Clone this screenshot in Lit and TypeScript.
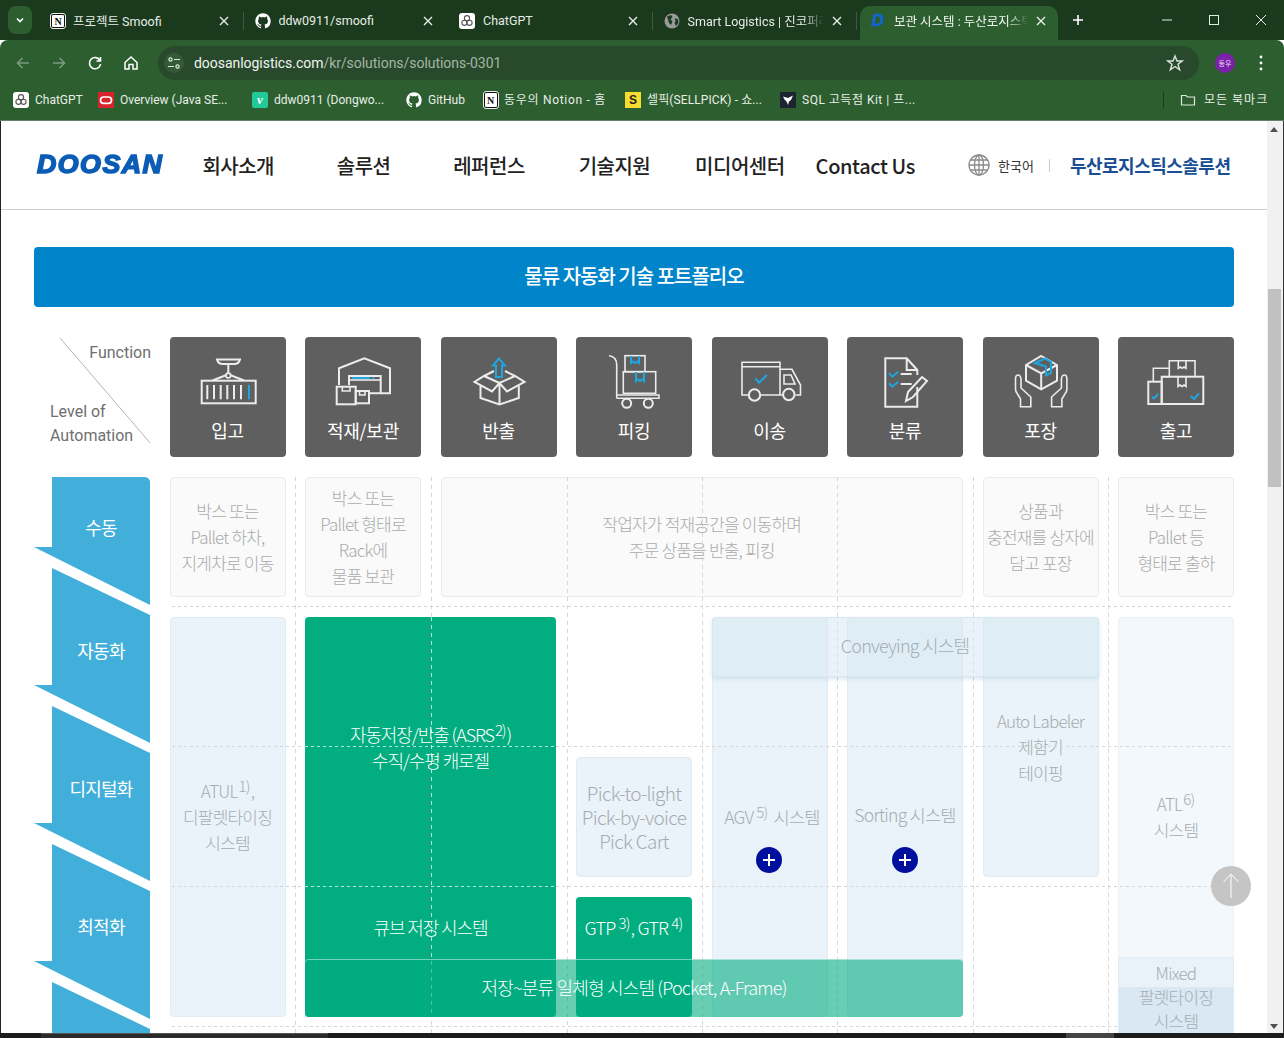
import { LitElement, html, svg, css } from "lit";
import { customElement } from "lit/decorators.js";

const ghPath = "M12 .5C5.65.5.5 5.65.5 12c0 5.08 3.29 9.39 7.86 10.91.58.1.79-.25.79-.56v-2c-3.2.7-3.87-1.36-3.87-1.36-.52-1.33-1.28-1.68-1.28-1.68-1.04-.71.08-.7.08-.7 1.15.08 1.76 1.18 1.76 1.18 1.03 1.76 2.69 1.25 3.34.96.1-.74.4-1.25.73-1.54-2.55-.29-5.24-1.28-5.24-5.68 0-1.26.45-2.28 1.18-3.09-.12-.29-.51-1.46.11-3.05 0 0 .97-.31 3.17 1.18a11 11 0 0 1 5.78 0c2.2-1.49 3.17-1.18 3.17-1.18.63 1.59.23 2.76.11 3.05.74.81 1.18 1.83 1.18 3.09 0 4.41-2.69 5.38-5.25 5.67.41.36.78 1.05.78 2.12v3.14c0 .31.21.67.8.55A11.5 11.5 0 0 0 23.5 12C23.5 5.65 18.35.5 12 .5z";

const favicons: Record<string, unknown> = {
  notion: html`<span class="fav notion">N</span>`,
  github: html`<svg class="fav" viewBox="0 0 24 24"><path d=${ghPath} fill="#fff"></path></svg>`,
  gpt: html`<svg class="fav" viewBox="0 0 16 16"><rect width="16" height="16" rx="3" fill="#fff"></rect><g fill="none" stroke="#555" stroke-width="1.1"><circle cx="8" cy="5.2" r="2.6"></circle><circle cx="5.5" cy="9.8" r="2.6"></circle><circle cx="10.5" cy="9.8" r="2.6"></circle></g></svg>`,
  globe: html`<svg class="fav" viewBox="0 0 16 16"><circle cx="8" cy="8" r="7.5" fill="#9a9a9a"></circle><path d="M3 3.5 7 2 8.5 4 6.5 6.5 8.5 8.5 7 12 5 10 4 6.5ZM10.5 5.5 14 6 14.5 10 12 13 10.5 10 11.5 8Z" fill="#1d3c20"></path></svg>`,
  doosan: html`<span class="fav doosan-fav">D</span>`,
  oracle: html`<svg class="fav" viewBox="0 0 16 16"><rect width="16" height="16" fill="#d8232a"></rect><rect x="2.5" y="5" width="11" height="6.4" rx="3.2" fill="none" stroke="#fff" stroke-width="1.7"></rect></svg>`,
  velog: html`<span class="fav velog">v</span>`,
  sellpick: html`<span class="fav sell">S</span>`,
  sql: html`<svg class="fav" viewBox="0 0 16 16"><rect width="16" height="16" rx="1" fill="#1c2333"></rect><path d="M3 4.5 8 6 13 3.5 11 8 9 9.5 8 13 6.5 9.5 4.5 7.5Z" fill="#fff"></path></svg>`,
};

const tabs = [
  { icon: "notion", title: "프로젝트 Smoofi" },
  { icon: "github", title: "ddw0911/smoofi" },
  { icon: "gpt", title: "ChatGPT" },
  { icon: "globe", title: "Smart Logistics | 진코퍼레이션", fade: true },
  { icon: "doosan", title: "보관 시스템 : 두산로지스틱스", fade: true, active: true },
];

const bookmarks = [
  { icon: "gpt", title: "ChatGPT", w: 85, ls: 0 },
  { icon: "oracle", title: "Overview (Java SE...", w: 154, ls: 0 },
  { icon: "velog", title: "ddw0911 (Dongwo...", w: 154, ls: 0 },
  { icon: "github", title: "GitHub", w: 77, ls: 0 },
  { icon: "notion", title: "동우의 Notion - 홈", w: 142, ls: 0.7 },
  { icon: "sellpick", title: "셀픽(SELLPICK) - 쇼...", w: 155, ls: 0.1 },
  { icon: "sql", title: "SQL 고득점 Kit | 프...", w: 150, ls: 0.5 },
];

const nav = ["회사소개", "솔루션", "레퍼런스", "기술지원", "미디어센터", "Contact Us"];

const functions = [
  {
    label: "입고",
    icon: svg`<path class="w" d="M47 22.5H70Q69 26.5 65 27H52Q48 26.5 47 22.5ZM58.3 27V36.5M42.5 43.5 56.5 38M74 43.5 60 38"></path><circle class="w thin" cx="58.3" cy="38.5" r="2.4"></circle>
      <rect class="w" x="31.7" y="43.7" width="54" height="22.6"></rect>
      <path class="w" d="M37.3 48V62.3M44 48V62.3M50.7 48V62.3M57.3 48V62.3M64 48V62.3M71 48V62.3"></path><path class="b" d="M79 48V62.3"></path>`,
  },
  {
    label: "적재/보관",
    icon: svg`<path class="w" d="M34 48V31.3L59.3 21.3 85 31.3V56.3H64M44 48V39H75.7V56.3"></path><path class="w thin" d="M44 43H75.7"></path>
      <path class="b" d="M46.7 41H65M67.5 41H69.5"></path>
      <rect class="w" x="31.7" y="49.7" width="19" height="17.6"></rect><rect class="w" x="50.7" y="54" width="13.3" height="12.3"></rect>
      <path class="w thin" d="M37.3 49.7V54H45V49.7M54.5 54V58H60V54"></path>`,
  },
  {
    label: "반출",
    icon: svg`<path class="w" d="M58.5 46 43 39 33.5 45 51 54.5 58.5 46 66 54.5 83.5 45 74 39 58.5 46ZM43 39 53 34M74 39 64 34M39.5 49V61L58.5 67.5 77.8 61V49M58.5 46V67.5"></path>
      <path class="b" d="M58 21.5 52 28.5H55V40H61V28.5H64Z"></path>`,
  },
  {
    label: "피킹",
    icon: svg`<path class="w thin" d="M33 18.7Q40.7 19.5 40.7 28V61.3M40.7 58H83V61.3H40.7"></path><circle class="w" cx="50.7" cy="66.3" r="4.5"></circle><circle class="w" cx="72.3" cy="66.3" r="4.5"></circle>
      <rect class="w thin" x="49" y="18.7" width="20" height="16"></rect><rect class="w thin" x="47.3" y="34.7" width="32.4" height="21.6"></rect>
      <path class="b" d="M55 19V26L57 24.5 59 26 61 24.5 63 26V19M60 35V44L62 42.5 64 44 66 42.5 68 44V35"></path>`,
  },
  {
    label: "이송",
    icon: svg`<path class="w thin" d="M36.5 58H30V25.3H68V58H48.5M30 29.7H68M68 32.3H80L88.5 48V58H83.5M71 58H68M72 38H79L83 47H72Z"></path><circle class="w" cx="42.5" cy="58" r="5.7"></circle><circle class="w" cx="76.8" cy="57.5" r="5.7"></circle>
      <path class="b" d="M43.5 41.3 47 45.7 55 38"></path>`,
  },
  {
    label: "분류",
    icon: svg`<path class="w" d="M70.3 50V69.7H38.3V21.3H59.7L70.3 33V38M59.7 21.3V33H70.3M53.7 37H64.7M53.7 47H64.7"></path>
      <path class="w" d="M59 64 61 55 75 40 80 44 66 60Z"></path>
      <path class="b" d="M42 36.3 45.3 39.7 51.3 34.7M42 46.3 45.3 49.7 51.3 44.7"></path>`,
  },
  {
    label: "포장",
    icon: svg`<path class="w" d="M58.2 19 74 28V43.7L58.2 52.3 43 43.7V28ZM43 28 58.2 36.3 74 28M58.2 36.3V52.3"></path>
      <path class="b" d="M52 26 62 21.5 68 25V36L63 38.5V29.5Z"></path>
      <path class="w thin" d="M47.8 69.7V60L38 51V42Q37.5 38 35 38 32.5 38 32.5 42V52Q32.5 55 34.5 57L37.5 62V69.7ZM47.8 69.7H37.5"></path>
      <path class="w thin" transform="translate(116.4 0) scale(-1 1)" d="M47.8 69.7V60L38 51V42Q37.5 38 35 38 32.5 38 32.5 42V52Q32.5 55 34.5 57L37.5 62V69.7ZM47.8 69.7H37.5"></path>`,
  },
  {
    label: "출고",
    icon: svg`<path class="w thin" d="M43.7 39.7H51.3V23.7H77V39.7M60.3 23.7V31.3L62.5 30 64 31.3 66 30 68 31.3V23.7"></path>
      <rect class="w" x="43.7" y="39.7" width="41.6" height="27.3"></rect><path class="w thin" d="M60 39.7V49.5L62 48 64 49.5 66 48 68 49.5V39.7M35.3 44.7V31.3H51.3"></path>
      <rect class="w" x="30.3" y="44.7" width="13.4" height="22.3"></rect>
      <path class="b" d="M33.7 59.7 36 61.5 40.3 57M72.7 59 76 62 81 56.3"></path>`,
  },
];

const gridXs = [260.5, 396.5, 532.5, 667.5, 803, 938.5, 1074];
const gridYs = [269, 409, 549, 689];

@customElement("app-root")
export class AppRoot extends LitElement {
  static styles = css`
    :host {
      display: flex;
      flex-direction: column;
      width: 1284px;
      height: 1038px;
      overflow: hidden;
      background: #fff;
      font-family: "Noto Sans CJK KR", sans-serif;
    }
    .tabstrip {
      height: 40px;
      flex: none;
      background: #1b3a1d;
      display: flex;
      align-items: stretch;
      color: #e6ece6;
      font: 12.5px Roboto, "Noto Sans CJK KR", sans-serif;
      padding-left: 8px;
    }
    .tab-menu {
      width: 24px;
      height: 28px;
      margin-top: 6px;
      margin-right: 8px;
      border-radius: 8px;
      background: #2d5e2f;
      display: flex;
      align-items: center;
      justify-content: center;
      flex: none;
    }
    .tab {
      width: 204.5px;
      flex: none;
      display: flex;
      align-items: center;
      gap: 8px;
      padding: 1px 0 0 10px;
      box-sizing: border-box;
      position: relative;
    }
    .tab:not(.active):not(:nth-last-child(6))::after {
      content: "";
      position: absolute;
      right: 1px;
      top: 12px;
      height: 18px;
      width: 1px;
      background: #3d5c3f;
    }
    .tab.active {
      width: 198px;
      background: #2d5e2f;
      border-radius: 10px 10px 0 0;
      margin-top: 6px;
      margin-left: 2px;
      padding-left: 10px;
      padding-top: 0;
      padding-bottom: 5px;
      color: #f2f6f2;
    }
    .tab-title {
      flex: 1;
      min-width: 0;
      white-space: nowrap;
      overflow: hidden;
    }
    .tab-title.fade {
      -webkit-mask-image: linear-gradient(90deg, #000 85%, transparent);
      mask-image: linear-gradient(90deg, #000 85%, transparent);
    }
    .tab-close {
      width: 10px;
      height: 10px;
      flex: none;
      margin-right: 16px;
    }
    .tab.active .tab-close {
      margin-right: 12px;
    }
    .tab-new {
      width: 12px;
      height: 12px;
      margin: 14px 0 0 14px;
      flex: none;
    }
    .win-controls {
      margin-left: auto;
      display: flex;
      align-items: center;
      gap: 35px;
      padding-right: 17px;
    }
    .win-controls svg {
      width: 12px;
      height: 12px;
      display: block;
    }
    .fav {
      width: 16px;
      height: 16px;
      flex: none;
      display: block;
    }
    .notion {
      box-sizing: border-box;
      background: #fff;
      color: #111;
      border: 1.5px solid #111;
      outline: 1px solid #eee;
      outline-offset: -0.5px;
      border-radius: 2px;
      font: bold 10px/13px "Liberation Serif", serif;
      text-align: center;
      width: 14px;
      height: 14px;
      margin: 0 0 0 1px;
    }
    .doosan-fav {
      color: #0f66cc;
      font: italic 900 17px/16px "Liberation Sans", sans-serif;
      -webkit-text-stroke: 0.6px #0f66cc;
      text-align: center;
    }
    .velog {
      background: #20c997;
      color: #fff;
      border-radius: 2px;
      font: italic bold 13px/14px "Liberation Serif", serif;
      text-align: center;
    }
    .sell {
      background: #f7dc2e;
      color: #222;
      font: bold 12px/16px "Liberation Sans", sans-serif;
      text-align: center;
    }
    .toolbar {
      height: 40px;
      flex: none;
      box-sizing: border-box;
      background: #2d5e2f;
      display: flex;
      align-items: center;
      border-radius: 8px 8px 0 0;
      padding: 6px 0 0 15px;
    }
    .toolbar-btn {
      width: 16px;
      height: 16px;
      margin-right: 20px;
      flex: none;
    }
    .omnibox {
      flex: none;
      width: 1041px;
      height: 34px;
      margin-left: -1px;
      background: #28492b;
      border-radius: 17px;
      display: flex;
      align-items: center;
      font: 14px Roboto, sans-serif;
      letter-spacing: -0.04px;
      color: #a4b6a5;
      box-sizing: border-box;
      padding: 0 15px 0 6px;
    }
    .omnibox .site {
      width: 20px;
      height: 20px;
      border-radius: 50%;
      background: #355a38;
      display: flex;
      align-items: center;
      justify-content: center;
      margin-right: 10px;
    }
    .omnibox b {
      font-weight: 400;
      color: #f0f4f0;
    }
    .omnibox .star {
      margin-left: auto;
      width: 18px;
      height: 18px;
    }
    .avatar {
      width: 20px;
      height: 20px;
      margin-left: 16px;
      border-radius: 50%;
      background: #7b22a8;
      color: #e9dcef;
      font-size: 7px;
      line-height: 20px;
      text-align: center;
      flex: none;
    }
    .kebab {
      width: 4px;
      height: 16px;
      margin-left: 24px;
      flex: none;
    }
    .bookmarks {
      height: 40px;
      flex: none;
      box-sizing: border-box;
      background: #2d5e2f;
      display: flex;
      align-items: center;
      padding: 0 0 0 13px;
      color: #e8eee8;
      font: 12px/16px Roboto, "Noto Sans CJK KR", sans-serif;
    }
    .bookmark {
      flex: none;
      display: flex;
      align-items: center;
      gap: 6px;
      white-space: nowrap;
    }
    .bookmark span {
      line-height: 16px;
      height: 16px;
    }
    .bm-sep {
      width: 1px;
      height: 16px;
      background: #1b3a1d;
      margin-left: 233px;
      margin-right: 16px;
    }
    .bm-all {
      display: flex;
      align-items: center;
      gap: 8px;
      letter-spacing: 1px;
    }
    .bm-all svg {
      width: 16px;
      height: 16px;
    }
    .chrome-edge {
      height: 1px;
      background: #6b7d6b;
      flex: none;
    }
    .viewport {
      height: 912px;
      flex: none;
      display: flex;
      position: relative;
      overflow: hidden;
      border-left: 1px solid #222;
      border-right: 1px solid #333;
    }
    .page {
      flex: 1;
      min-width: 0;
      overflow: hidden;
    }
    .scrollbar {
      width: 16px;
      flex: none;
      background: #f1f1f1;
      display: flex;
      flex-direction: column;
      align-items: center;
      box-sizing: border-box;
      padding-top: 168px;
      position: relative;
    }
    .scroll-thumb {
      width: 13px;
      height: 198px;
      background: #c1c1c1;
      margin-right: 2px;
    }
    .scroll-up,
    .scroll-down {
      position: absolute;
      left: 3px;
      width: 0;
      height: 0;
      border-left: 4px solid transparent;
      border-right: 4px solid transparent;
    }
    .scroll-up {
      top: 6px;
      border-bottom: 5px solid #505050;
    }
    .scroll-down {
      bottom: 4px;
      border-top: 5px solid #505050;
    }
    .header {
      height: 89px;
      box-sizing: border-box;
      border-bottom: 1px solid #cfcfcf;
      display: flex;
      align-items: center;
      padding: 0 0 0 36px;
    }
    .logo {
      width: 138.5px;
      flex: none;
      font: italic 900 25px/28px "Liberation Sans", sans-serif;
      color: #0b5cb5;
      -webkit-text-stroke: 1.5px #0b5cb5;
      letter-spacing: 1.4px;
      margin-top: -3px;
      transform: scaleX(1.07);
      transform-origin: left center;
    }
    .nav {
      width: 752.5px;
      flex: none;
      display: grid;
      grid-template-columns: repeat(6, 1fr);
      text-align: center;
      font-size: 20px;
      font-weight: 500;
      letter-spacing: -0.5px;
      color: #222;
    }
    .nav span.latin {
      letter-spacing: -0.4px;
    }
    .lang {
      display: flex;
      align-items: center;
      gap: 8px;
      margin-left: 40px;
      font-size: 13px;
      color: #333;
    }
    .lang span {
      margin-top: 1px;
    }
    .lang svg {
      width: 22px;
      height: 22px;
    }
    .lang-sep {
      width: 1px;
      height: 13px;
      background: #ccc;
      margin: 0 20px 0 15px;
    }
    .site-name {
      color: #1a4e94;
      font-size: 18px;
      font-weight: 700;
      letter-spacing: -0.5px;
      white-space: nowrap;
    }
    .body {
      padding: 37px 33px 0;
      width: 1200px;
    }
    .title {
      height: 60px;
      box-sizing: border-box;
      padding-bottom: 3px;
      background: #0085cb;
      border-radius: 4px;
      color: #fff;
      font-size: 20px;
      font-weight: 500;
      letter-spacing: -1px;
      display: flex;
      align-items: center;
      justify-content: center;
      margin-bottom: 30px;
    }
    .matrix {
      position: relative;
      display: grid;
      grid-template-columns: repeat(9, 116px);
      grid-template-rows: repeat(6, 120px);
      column-gap: 19.5px;
      row-gap: 20px;
      font-size: 17px;
      font-weight: 300;
      letter-spacing: -0.8px;
      line-height: 26px;
    }
    .corner {
      position: relative;
      display: flex;
      flex-direction: column;
      justify-content: space-between;
      padding: 4px 0 9px 16px;
      font: 400 16px/24px Roboto, sans-serif;
      color: #6f6f6f;
      letter-spacing: 0;
    }
    .corner .fn {
      text-align: right;
      margin-right: -1px;
    }
    .corner svg {
      position: absolute;
      left: 0;
      top: 0;
      width: 116px;
      height: 120px;
    }
    .fn-card {
      background: #5f5f5f;
      border-radius: 4px;
      color: #fff;
      text-align: center;
      font-size: 18px;
      font-weight: 400;
      letter-spacing: -0.3px;
    }
    .fn-card svg {
      display: block;
      width: 116px;
      height: 80px;
    }
    .w {
      fill: none;
      stroke: #ececec;
      stroke-width: 2;
    }
    .w.thin {
      stroke-width: 1.6;
    }
    .b {
      fill: none;
      stroke: #1fa6df;
      stroke-width: 2;
    }
    .levels {
      grid-column: 1;
      grid-row: 2 / 7;
      display: flex;
      flex-direction: column;
      color: #fff;
      font-size: 18px;
      font-weight: 400;
      letter-spacing: -0.8px;
      line-height: 24px;
      text-align: center;
    }
    .level {
      flex: none;
      height: 175px;
      margin-top: -37px;
      box-sizing: border-box;
      padding: 70px 0 0 18px;
      background: #42aeda;
      clip-path: polygon(18px 0, 116px 47px, 116px 175px, 0 117px, 18px 117px);
    }
    .level.first {
      height: 128px;
      margin-top: 0;
      padding-top: 38px;
      clip-path: polygon(18px 0, 111px 0, 114px 1px, 116px 4px, 116px 128px, 0 70px, 18px 70px);
    }
    .cell {
      box-sizing: border-box;
      border-radius: 4px;
      display: flex;
      align-items: center;
      justify-content: center;
      text-align: center;
      position: relative;
    }
    .cell sup {
      font-size: 15px;
      line-height: 0;
      vertical-align: 6px;
      margin: 0 1px;
    }
    .manual {
      background: #fafafa;
      border: 1px solid #ebebeb;
      color: #a9abad;
    }
    .auto {
      background: #eaf3f9;
      border: 1px solid #e0ebf3;
      color: #a6acb1;
    }
    .auto.faint {
      background: #f3f8fc;
      border-color: #ebf2f7;
    }
    .auto.sys {
      font-size: 17.6px;
    }
    .auto.sys sup {
      margin: 0 3px;
    }
    .auto.agv {
      padding-left: 5px;
    }
    .auto.sorting {
      padding-bottom: 4px;
    }
    .auto.pick {
      font-size: 19px;
      letter-spacing: -0.7px;
      line-height: 24px;
    }
    .c1 { grid-column: 2; }
    .c2 { grid-column: 3; }
    .c4 { grid-column: 5; }
    .c5 { grid-column: 6; }
    .c6 { grid-column: 7; }
    .c7 { grid-column: 8; }
    .c8 { grid-column: 9; }
    .r1 { grid-row: 2; }
    .r2-4 { grid-row: 3 / 6; }
    .r2-3 { grid-row: 3 / 5; }
    .r3 { grid-row: 4; }
    .r4 { grid-row: 5; }
    .wide-work { grid-column: 4 / 8; }
    .conveying {
      grid-column: 6 / 9;
      grid-row: 3;
      height: 60px;
      padding-bottom: 5px;
      z-index: 2;
      font-size: 18px;
      background: rgba(214, 232, 243, 0.55);
      border: 1px solid #d8e7f0;
      box-shadow: 0 2px 4px rgba(150, 185, 205, 0.35);
      color: #a3aeb5;
    }
    .plus {
      position: absolute;
      left: 50%;
      top: 229px;
      margin-left: -13.5px;
      width: 26px;
      height: 26px;
      display: block;
    }
    .lines {
      position: absolute;
      inset: 0;
      z-index: 1;
      pointer-events: none;
    }
    .vline,
    .hline {
      position: absolute;
    }
    .vline {
      width: 1px;
      top: 140px;
      bottom: 0;
      background: repeating-linear-gradient(180deg, #d6d6d6 0 4px, transparent 4px 8px);
    }
    .hline {
      height: 1px;
      left: 138px;
      right: 2px;
      background: repeating-linear-gradient(90deg, #d6d6d6 0 3px, transparent 3px 6px);
    }
    .green {
      background: #02ad80;
      color: #fff;
      z-index: 2;
      font-size: 18px;
    }
    .asrs {
      grid-column: 3 / 5;
      grid-row: 3 / 6;
      width: 251px;
      display: block;
      letter-spacing: -1.1px;
    }
    .asrs-top {
      height: 260px;
      display: flex;
      align-items: center;
      justify-content: center;
    }
    .asrs-cube {
      height: 100px;
      display: flex;
      align-items: center;
      justify-content: center;
    }
    .asrs .vline {
      left: 126px;
      top: 0;
      background: repeating-linear-gradient(180deg, rgba(255, 255, 255, 0.7) 0 4px, transparent 4px 8px);
    }
    .asrs .hline {
      left: 0;
      right: 0;
      background: repeating-linear-gradient(90deg, rgba(255, 255, 255, 0.7) 0 3px, transparent 3px 6px);
    }
    .asrs .h1 { top: 129px; }
    .asrs .h2 { top: 269px; }
    .gtp {
      padding-bottom: 60px;
      white-space: nowrap;
    }
    .gtp sup {
      margin: 0 1px 0 3px;
    }
    .bar {
      grid-column: 3 / 8;
      grid-row: 5;
      align-self: end;
      height: 58px;
      padding-bottom: 3px;
      z-index: 3;
      font-size: 18px;
      background: rgba(2, 173, 128, 0.6);
      border-top: 1px solid rgba(255, 255, 255, 0.45);
      color: #fff;
    }
    .mixed {
      grid-column: 9;
      grid-row: 5 / 6;
      margin-top: 60px;
      height: 120px;
      z-index: 3;
      align-items: flex-start;
      padding-top: 3px;
      line-height: 24px;
      background: linear-gradient(180deg, #e9f2f8 29px, #d9e8f2 29px);
      border: 1px solid #e0ebf3;
      color: #a5aeb5;
    }
    .to-top {
      position: absolute;
      left: 1210px;
      top: 745px;
      width: 40px;
      height: 40px;
      border-radius: 50%;
      background: #c5c5c5;
      z-index: 5;
    }
    .to-top svg {
      width: 40px;
      height: 40px;
      display: block;
    }
    .taskbar {
      height: 5px;
      flex: none;
      background: #1c1c1c;
      display: flex;
    }
    .taskbar .seg1 {
      width: 287px;
      margin-left: 41px;
      border-top: 1px solid #555;
      background: #2a2a2a;
    }
    .taskbar .seg2 {
      width: 48px;
      margin-left: 738px;
      background: #444;
    }
  `;

  private renderTabs() {
    return tabs.map(
      (t) => html`<div class="tab ${t.active ? "active" : ""}">
        ${favicons[t.icon]}
        <span class="tab-title ${t.fade ? "fade" : ""}">${t.title}</span>
        <svg class="tab-close" viewBox="0 0 10 10"><path d="M1 1 9 9M9 1 1 9" stroke="#e6ece6" stroke-width="1.4"></path></svg>
      </div>`
    );
  }

  private plus() {
    return html`<svg class="plus" viewBox="0 0 26 26"><circle cx="13" cy="13" r="13" fill="#000f9e"></circle><path d="M13 7V19M7 13H19" stroke="#fff" stroke-width="2"></path></svg>`;
  }

  render() {
    return html`
      <div class="tabstrip">
        <div class="tab-menu"><svg width="10" height="10" viewBox="0 0 10 10"><path d="M2 3.5 5 6.5 8 3.5" fill="none" stroke="#fff" stroke-width="1.6"></path></svg></div>
        ${this.renderTabs()}
        <svg class="tab-new" viewBox="0 0 12 12"><path d="M6 1V11M1 6H11" stroke="#fff" stroke-width="1.6"></path></svg>
        <div class="win-controls">
          <svg viewBox="0 0 12 12"><path d="M1 6H11" stroke="#e6ece6"></path></svg>
          <svg viewBox="0 0 12 12"><rect x="1.5" y="1.5" width="9" height="9" fill="none" stroke="#e6ece6"></rect></svg>
          <svg viewBox="0 0 12 12"><path d="M1 1 11 11M11 1 1 11" stroke="#e6ece6"></path></svg>
        </div>
      </div>
      <div class="toolbar">
        <svg class="toolbar-btn" viewBox="0 0 16 16"><path d="M14 8H3M7.5 3 2.5 8 7.5 13" fill="none" stroke="#7f9a80" stroke-width="1.5"></path></svg>
        <svg class="toolbar-btn" viewBox="0 0 16 16"><path d="M2 8H13M8.5 3 13.5 8 8.5 13" fill="none" stroke="#7f9a80" stroke-width="1.5"></path></svg>
        <svg class="toolbar-btn" viewBox="0 0 16 16"><path d="M13 5.5A5.6 5.6 0 1 0 13.6 9M13.5 2V6H9.5" fill="none" stroke="#fff" stroke-width="1.6"></path></svg>
        <svg class="toolbar-btn" viewBox="0 0 16 16"><path d="M2 7.5 8 2 14 7.5V14H10V9.5H6V14H2Z" fill="none" stroke="#fff" stroke-width="1.5"></path></svg>
        <div class="omnibox">
          <span class="site"><svg width="14" height="14" viewBox="0 0 14 14"><g fill="none" stroke="#dfe8df" stroke-width="1.2"><circle cx="3.5" cy="3.5" r="1.6"></circle><path d="M7 3.5H13M1 10.5H7"></path><circle cx="10.5" cy="10.5" r="1.6"></circle></g></svg></span>
          <span><b>doosanlogistics.com</b>/kr/solutions/solutions-0301</span>
          <svg class="star" viewBox="0 0 18 18"><path d="M9 2 11 7H16.2L12 10.3 13.6 15.8 9 12.5 4.4 15.8 6 10.3 1.8 7H7Z" fill="none" stroke="#dbe4db" stroke-width="1.4"></path></svg>
        </div>
        <div class="avatar">동우</div>
        <svg class="kebab" viewBox="0 0 4 16"><circle cx="2" cy="2" r="1.4" fill="#fff"></circle><circle cx="2" cy="8" r="1.4" fill="#fff"></circle><circle cx="2" cy="14" r="1.4" fill="#fff"></circle></svg>
      </div>
      <div class="bookmarks">
        ${bookmarks.map(
          (b) => html`<div class="bookmark" style="width:${b.w}px;letter-spacing:${b.ls}px">${favicons[b.icon]}<span>${b.title}</span></div>`
        )}
        <div class="bm-sep"></div>
        <div class="bm-all">
          <svg viewBox="0 0 16 16"><path d="M1.5 3.5H6L7.5 5H14.5V13H1.5Z" fill="none" stroke="#dfe8df" stroke-width="1.2"></path></svg>
          <span>모든 북마크</span>
        </div>
      </div>
      <div class="chrome-edge"></div>
      <div class="viewport">
        <div class="page">
          <header class="header">
            <div class="logo">DOOSAN</div>
            <nav class="nav">
              ${nav.map((n) => html`<span class=${n.startsWith("Contact") ? "latin" : ""}>${n}</span>`)}
            </nav>
            <div class="lang">
              <svg viewBox="0 0 22 22"><g fill="none" stroke="#8a8a8a" stroke-width="1.3"><circle cx="11" cy="11" r="10"></circle><ellipse cx="11" cy="11" rx="4.5" ry="10"></ellipse><path d="M11 1V21M1 11H21M2.5 6H19.5M2.5 16H19.5"></path></g></svg>
              <span>한국어</span>
            </div>
            <div class="lang-sep"></div>
            <div class="site-name">두산로지스틱스솔루션</div>
          </header>
          <div class="body">
            <div class="title">물류 자동화 기술 포트폴리오</div>
            <div class="matrix">
              <div class="corner">
                <svg viewBox="0 0 116 120"><path d="M26 1 117 107" stroke="#b5b5b5" fill="none"></path></svg>
                <div class="fn">Function</div>
                <div>Level of<br />Automation</div>
              </div>
              ${functions.map(
                (f) => html`<div class="fn-card"><svg viewBox="0 0 116 80">${f.icon}</svg>${f.label}</div>`
              )}

              <div class="levels">
                <div class="level first">수동</div>
                <div class="level">자동화</div>
                <div class="level">디지털화</div>
                <div class="level">최적화</div>
                <div class="level"></div>
              </div>

              <div class="cell manual c1 r1"><span>박스 또는<br />Pallet 하차,<br />지게차로 이동</span></div>
              <div class="cell manual c2 r1"><span>박스 또는<br />Pallet 형태로<br />Rack에<br />물품 보관</span></div>
              <div class="cell manual wide-work r1"><span>작업자가 적재공간을 이동하며<br />주문 상품을 반출, 피킹</span></div>
              <div class="cell manual c7 r1"><span>상품과<br />충전재를 상자에<br />담고 포장</span></div>
              <div class="cell manual c8 r1"><span>박스 또는<br />Pallet 등<br />형태로 출하</span></div>

              <div class="cell auto c1 r2-4"><span>ATUL<sup>1)</sup>,<br />디팔렛타이징<br />시스템</span></div>
              <div class="cell auto pick c4 r3"><span>Pick-to-light<br />Pick-by-voice<br />Pick Cart</span></div>
              <div class="cell auto sys agv c5 r2-4"><span>AGV<sup>5)</sup> 시스템</span>${this.plus()}</div>
              <div class="cell auto sys sorting c6 r2-4"><span>Sorting 시스템</span>${this.plus()}</div>
              <div class="cell auto c7 r2-3"><span>Auto Labeler<br />제함기<br />테이핑</span></div>
              <div class="cell auto faint c8 r2-4"><span>ATL<sup>6)</sup><br />시스템</span></div>
              <div class="cell conveying"><span>Conveying 시스템</span></div>

              <div class="lines">
                ${gridXs.map((x) => html`<div class="vline" style="left:${x}px"></div>`)}
                ${gridYs.map((y) => html`<div class="hline" style="top:${y}px"></div>`)}
              </div>

              <div class="cell green asrs">
                <div class="vline"></div>
                <div class="hline h1"></div>
                <div class="hline h2"></div>
                <div class="asrs-top"><span>자동저장/반출 (ASRS<sup>2)</sup>)<br />수직/수평 캐로젤</span></div>
                <div class="asrs-cube"><span>큐브 저장 시스템</span></div>
              </div>
              <div class="cell green gtp c4 r4"><span>GTP<sup>3)</sup>, GTR<sup>4)</sup></span></div>
              <div class="cell bar"><span>저장~분류 일체형 시스템 (Pocket, A-Frame)</span></div>
              <div class="cell mixed"><span>Mixed<br />팔렛타이징<br />시스템</span></div>
            </div>
          </div>
        </div>
        <div class="scrollbar">
          <div class="scroll-up"></div>
          <div class="scroll-thumb"></div>
          <div class="scroll-down"></div>
        </div>
        <div class="to-top"><svg viewBox="0 0 40 40"><path d="M20 32V8M12.5 16 20 8 27.5 16" fill="none" stroke="#fff" stroke-width="1"></path></svg></div>
      </div>
      <div class="taskbar"><div class="seg1"></div><div class="seg2"></div></div>
    `;
  }
}
